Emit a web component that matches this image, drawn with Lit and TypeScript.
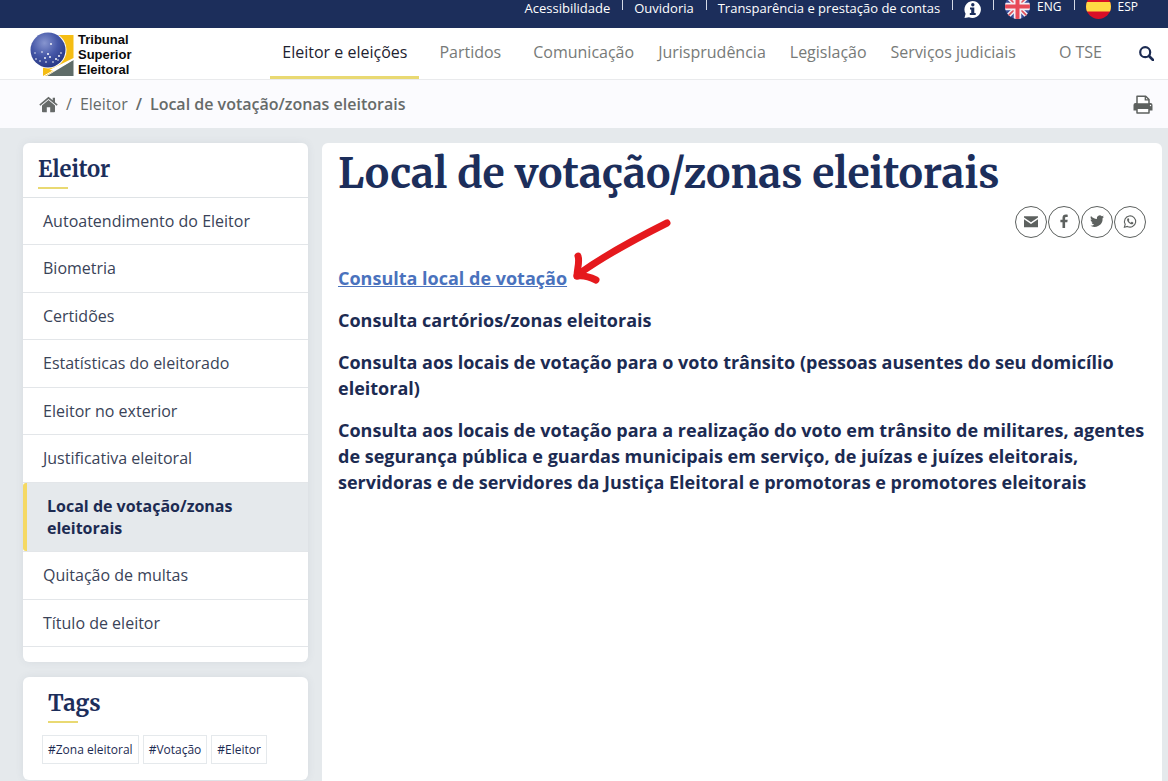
import { LitElement, html, svg, css } from "lit";
import { customElement } from "lit/decorators.js";
import { classMap } from "lit/directives/class-map.js";

const NAV = [
  { label: "Eleitor e eleições", active: true, spaced: true },
  { label: "Partidos", spaced: true },
  { label: "Comunicação" },
  { label: "Jurisprudência" },
  { label: "Legislação" },
  { label: "Serviços judiciais", wide: true },
  { label: "O TSE" },
];

const MENU = [
  "Autoatendimento do Eleitor",
  "Biometria",
  "Certidões",
  "Estatísticas do eleitorado",
  "Eleitor no exterior",
  "Justificativa eleitoral",
  "Local de votação/zonas eleitorais",
  "Quitação de multas",
  "Título de eleitor",
];
const CURRENT = "Local de votação/zonas eleitorais";

const TAGS = ["#Zona eleitoral", "#Votação", "#Eleitor"];

const LINKS = [
  "Consulta local de votação",
  "Consulta cartórios/zonas eleitorais",
  "Consulta aos locais de votação para o voto trânsito (pessoas ausentes do seu domicílio eleitoral)",
  "Consulta aos locais de votação para a realização do voto em trânsito de militares, agentes de segurança pública e guardas municipais em serviço, de juízas e juízes eleitorais, servidoras e de servidores da Justiça Eleitoral e promotoras e promotores eleitorais",
];

const SHARE = [
  {
    label: "Enviar por e-mail",
    art: svg`<path d="M1 2.200h14v1.300L8 8.300 1 3.500z"/><path d="M1 5.200v8h14v-8L8 10z"/>`,
  },
  {
    label: "Compartilhar no Facebook",
    art: svg`<path d="M9.100 14V8.200h2.200l.4-2.500H9.100V4.200c0-.8.3-1.200 1.200-1.200h1.400V.7C11.300.6 10.600.5 9.900.5 7.700.5 6.500 1.700 6.500 3.800v1.900H4.400v2.500h2.100V14z"/>`,
  },
  {
    label: "Compartilhar no Twitter",
    art: svg`<path d="M15 2.700c-.5.200-1.100.4-1.600.5.600-.4 1-.9 1.200-1.600-.5.300-1.200.6-1.800.7A2.900 2.900 0 0 0 7.900 5C5.500 4.900 3.400 3.700 2 2c-.8 1.300-.4 3 .9 3.900-.5 0-.9-.1-1.300-.4 0 1.400 1 2.600 2.300 2.900-.4.100-.9.100-1.300 0 .4 1.200 1.400 2 2.700 2A5.800 5.800 0 0 1 1 11.600 8.200 8.200 0 0 0 13.600 4.200c.6-.4 1-.9 1.400-1.500z"/>`,
  },
  {
    label: "Compartilhar no WhatsApp",
    art: svg`<path fill="none" stroke="currentColor" stroke-width="1.100" d="M2.400 13.200l.8-3A5.600 5.600 0 1 1 5.400 12.400z"/><path d="M6.200 4.300c-.5 0-1.100.7-1.100 1.500 0 1.700 2.700 4.500 4.600 4.500.8 0 1.700-.6 1.700-1.400 0-.4-1.400-1.100-1.700-1.100-.3 0-.6.9-.9.9-.5 0-2-1.300-2-1.900 0-.3.500-.5.500-.9 0-.3-.5-1.600-.8-1.600z"/>`,
  },
];

const ukFlag = svg`
  <clipPath id="uk"><circle cx="12.500" cy="12.500" r="12.500"/></clipPath>
  <g clip-path="url(#uk)">
    <path fill="#3a4f9a" d="M0 0h25v25H0z"/>
    <path stroke="#f3eef4" stroke-width="4.500" d="M0 0l25 25M25 0L0 25"/>
    <path stroke="#e0525e" stroke-width="1.600" d="M0 0l25 25M25 0L0 25"/>
    <path stroke="#f3eef4" stroke-width="7.500" d="M12.500 0v25M0 12.500h25"/>
    <path stroke="#e84a58" stroke-width="4" d="M12.500 0v25M0 12.500h25"/>
  </g>`;

const esFlag = svg`
  <clipPath id="es"><circle cx="12.500" cy="12.500" r="12.500"/></clipPath>
  <g clip-path="url(#es)">
    <path fill="#d80f27" d="M0 0h25v25H0z"/>
    <path fill="#ffda44" d="M0 8h25v9.500H0z"/>
  </g>`;

@customElement("app-root")
export class AppRoot extends LitElement {
  static styles = css`
    :host {
      display: flex;
      flex-direction: column;
      min-height: 100vh;
      background: #e5e9ec;
      color: #1c2b52;
      font-family: "Open Sans", "Noto Sans", sans-serif;
      font-size: 16px;
      line-height: 22px;
    }
    * { box-sizing: border-box; }
    a { color: inherit; text-decoration: none; }
    ul, ol { list-style: none; margin: 0; padding: 0; }
    svg { display: block; flex: none; }
    button {
      padding: 0;
      border: 0;
      background: none;
      color: inherit;
      font: inherit;
      cursor: pointer;
    }

    .topbar {
      display: flex;
      justify-content: flex-end;
      gap: 12px;
      height: 28px;
      padding-right: 30px;
      background: #1c2e5b;
      color: #fff;
      font-size: 13px;
      line-height: 17px;
    }
    .topbar li { display: flex; gap: 11px; }
    .topbar li + li::before {
      content: "";
      width: 1px;
      height: 10px;
      background: #d5dae6;
    }
    .lang { display: flex; gap: 7px; font-size: 12px; line-height: 14px; }

    .header {
      display: flex;
      align-items: center;
      justify-content: space-between;
      height: 52px;
      padding: 0 14px 0 30px;
      background: #fff;
      border-bottom: 1px solid #e9eaec;
    }
    .logo {
      display: flex;
      gap: 4px;
      align-items: flex-end;
      color: #0b0b0b;
      font: bold 13px/15px "Liberation Sans", Arial, sans-serif;
    }
    .logo-text { width: 60px; padding-top: 2px; }
    .nav { display: flex; align-items: stretch; height: 51px; }
    .nav ul { display: flex; color: #777a78; }
    .nav li { display: flex; }
    .nav a {
      padding: 13px 12px 0;
      border-bottom: 3px solid transparent;
      white-space: nowrap;
    }
    .nav .active { color: #1d2230; border-color: #e9d972; }
    .nav .spaced { margin-right: 8px; }
    .nav .wide { margin-right: 19px; }
    .search { margin-left: 25px; color: #1c2b52; }

    .crumbs {
      display: flex;
      align-items: center;
      justify-content: space-between;
      height: 48px;
      padding: 0 15px 0 39px;
      background: #fbfbfe;
      color: #666a69;
    }
    .crumbs ol { display: flex; align-items: center; }
    .crumbs li { display: flex; }
    .crumbs li + li::before { content: "/"; padding: 0 8px; }
    .here { font-weight: 600; }

    .columns {
      display: grid;
      grid-template-columns: 285px minmax(0, 1fr);
      gap: 14px;
      flex: 1;
      padding: 15px 6px 0 23px;
    }
    .side { display: flex; flex-direction: column; gap: 15px; }
    .card {
      background: #fff;
      border-radius: 6px;
      box-shadow: 0 0 8px rgba(60, 80, 100, 0.08);
    }
    h1, h2 {
      margin: 0;
      font-family: Merriweather, "DejaVu Serif Condensed", "DejaVu Serif", serif;
      font-weight: bold;
      color: #1c2e5b;
    }
    h2 { font-size: 22px; line-height: 28px; }
    h2::after {
      content: "";
      display: block;
      width: 30px;
      height: 2px;
      margin-top: 4px;
      background: #e9d972;
    }
    .menu-card { padding-bottom: 15px; }
    .menu-card h2 { padding: 12px 15px 8px; }
    .menu {
      display: flex;
      flex-direction: column;
      min-height: 450px;
      border-top: 1px solid #dfe3e6;
    }
    .menu li { display: flex; flex: 1 0 auto; border-bottom: 1px solid #e3e6e9; }
    .menu a {
      flex: 1;
      padding: 12px 40px 12px 20px;
      color: #3a4358;
    }
    .menu .current {
      background: #e5e9ec;
      border-left: 4px solid #f5d964;
      border-radius: 3px 0 0 3px;
      color: #1c2b52;
      font-weight: bold;
    }
    .tags-card { padding: 12px 19px 16px; }
    .tags-card h2 { padding-left: 6px; }
    .tags { display: flex; gap: 4px; padding-top: 12px; }
    .tags a {
      display: block;
      padding: 5px;
      border: 1px solid #e5e9ec;
      font-size: 12px;
      line-height: 17px;
    }

    .main {
      position: relative;
      padding: 7px 16px;
      background: #fff;
      border-radius: 6px 6px 0 0;
    }
    h1 { font-size: 41px; line-height: 48px; }
    .share { display: flex; justify-content: flex-end; gap: 1px; padding: 8px 0 27px; color: #5d615f; }
    .share button {
      display: grid;
      place-items: center;
      width: 32px;
      height: 32px;
      border: 1px solid #5d615f;
      border-radius: 50%;
    }
    .links { display: grid; gap: 16px; font-size: 18px; line-height: 26px; font-weight: bold; }
    .links .first { color: #4a72bd; text-decoration: underline; }
    .pointer { position: absolute; left: 250px; top: 72px; }
  `;

  render() {
    return html`
      <ul class="topbar">
        <li><a href="#">Acessibilidade</a></li>
        <li><a href="#">Ouvidoria</a></li>
        <li><a href="#">Transparência e prestação de contas</a></li>
        <li>
          <a href="#" aria-label="Acesso à informação">
            <svg width="17" height="19" viewBox="0 0 17 19">
              <path fill="#fff" d="M8.500 1a8.500 8.500 0 1 1-3.500 16.300L.500 18l1.100-4.200A8.500 8.500 0 0 1 8.500 1z"/>
              <circle cx="8.800" cy="4.800" r="1.700" fill="#1c2e5b"/>
              <path fill="#1c2e5b" d="M6 7.500h4.300v5.500h1.400v2H5.800v-2h1.400V9.400H6z"/>
            </svg>
          </a>
        </li>
        <li>
          <a class="lang" href="#"><svg width="25" height="19" viewBox="0 6 25 19">${ukFlag}</svg>ENG</a>
        </li>
        <li>
          <a class="lang" href="#"><svg width="25" height="19" viewBox="0 6 25 19">${esFlag}</svg>ESP</a>
        </li>
      </ul>

      <header class="header">
        <a class="logo" href="#">
          <svg width="44" height="46" viewBox="0 0 44 46">
            <defs>
              <radialGradient id="globe" cx=".4" cy=".3" r=".75">
                <stop offset="0" stop-color="#8795cf"/>
                <stop offset=".5" stop-color="#4658a8"/>
                <stop offset="1" stop-color="#243581"/>
              </radialGradient>
            </defs>
            <path fill="#f5bd13" d="M13 4h30.500v23L13 42z"/>
            <path fill="#5f6c68" d="M43.500 29v16H17z"/>
            <path fill="#f5bd13" d="M13 37v8h3l8-5z"/>
            <path stroke="#fff" d="M13 45.500L44 28"/>
            <circle cx="18" cy="19" r="18.500" fill="#fff"/>
            <circle cx="18" cy="19" r="17.500" fill="url(#globe)"/>
            <g fill="#fff">
              <circle cx="21" cy="13" r=".9"/><circle cx="12" cy="21" r=".8"/>
              <circle cx="6" cy="28" r=".8"/><circle cx="10" cy="30" r=".8"/>
              <circle cx="15" cy="27" r=".9"/><circle cx="18" cy="23" r="1"/>
              <circle cx="20" cy="26" r=".9"/><circle cx="16" cy="31" r=".8"/>
              <circle cx="23" cy="31" r=".8"/><circle cx="26" cy="28" r="1"/>
              <circle cx="29" cy="25" r=".9"/><circle cx="31" cy="22" r=".8"/>
              <circle cx="28" cy="29" r=".7"/><circle cx="5" cy="22" r=".7"/>
            </g>
          </svg>
          <span class="logo-text">Tribunal Superior Eleitoral</span>
        </a>
        <nav class="nav">
          <ul>
            ${NAV.map(
              (n) => html`<li>
                <a href="#" class=${classMap({ active: !!n.active, spaced: !!n.spaced, wide: !!n.wide })}>${n.label}</a>
              </li>`
            )}
          </ul>
          <button class="search" aria-label="Buscar">
            <svg width="15" height="15" viewBox="0 0 15 15" fill="none" stroke="currentColor">
              <circle cx="6.200" cy="6.200" r="5" stroke-width="2.200"/>
              <path d="M10 10l4 4" stroke-width="2.600" stroke-linecap="round"/>
            </svg>
          </button>
        </nav>
      </header>

      <nav class="crumbs">
        <ol>
          <li>
            <a href="#" aria-label="Início">
              <svg width="19" height="17" viewBox="0 0 19 17" fill="currentColor">
                <path d="M9.500 4L3 9.500V15.500q0 .8.800.8h4v-5h3.400v5h4q.800 0 .800-.8V9.500z"/>
                <path d="M9.500.7L.3 8.500l1 1.200L9.500 2.900l8.200 6.800 1-1.200-2.700-2.300V1.700h-2.300v2.500z"/>
              </svg>
            </a>
          </li>
          <li><a href="#">Eleitor</a></li>
          <li class="here">Local de votação/zonas eleitorais</li>
        </ol>
        <button aria-label="Imprimir">
          <svg width="20" height="19" viewBox="0 0 20 19">
            <path fill="#5d615f" d="M2.500 8h15A2 2 0 0 1 19.500 10v5.500H.500V10a2 2 0 0 1 2-2z"/>
            <path fill="#fff" stroke="#5d615f" stroke-width="1.500" stroke-linejoin="round" d="M4 9V1.300h8.700L16 4.500V9z"/>
            <path fill="#5d615f" d="M3.300 9h13.400v3.500H3.300z"/>
            <path fill="#fff" stroke="#5d615f" stroke-width="1.500" stroke-linejoin="round" d="M4 13.300h12V18H4z"/>
            <path fill="none" stroke="#5d615f" stroke-width="1.300" d="M12.300 1.500v3.400H16"/>
            <circle cx="17.500" cy="10.500" r=".7" fill="#fff"/>
          </svg>
        </button>
      </nav>

      <div class="columns">
        <aside class="side">
          <section class="card menu-card">
            <h2>Eleitor</h2>
            <ul class="menu">
              ${MENU.map(
                (m) => html`<li><a href="#" class=${classMap({ current: m === CURRENT })}>${m}</a></li>`
              )}
            </ul>
          </section>
          <section class="card tags-card">
            <h2>Tags</h2>
            <ul class="tags">
              ${TAGS.map((t) => html`<li><a href="#">${t}</a></li>`)}
            </ul>
          </section>
        </aside>

        <main class="main">
          <h1>Local de votação/zonas eleitorais</h1>
          <div class="share">
            ${SHARE.map(
              (s) => html`<button aria-label=${s.label}>
                <svg width="16" height="16" viewBox="0 0 16 16" fill="currentColor">${s.art}</svg>
              </button>`
            )}
          </div>
          <div class="links">
            ${LINKS.map((l, i) => html`<div><a href="#" class=${classMap({ first: i === 0 })}>${l}</a></div>`)}
          </div>
          <svg class="pointer" width="102" height="70" viewBox="0 0 102 70" fill="none" stroke="#e5191d" stroke-width="7" stroke-linecap="round" stroke-linejoin="round">
            <path d="M95 8C65 23 35 39 8 58"/>
            <path d="M6 41C8 47 5 54 5 61"/>
            <path d="M5 61C12 60 18 62 24 65"/>
          </svg>
        </main>
      </div>
    `;
  }
}
